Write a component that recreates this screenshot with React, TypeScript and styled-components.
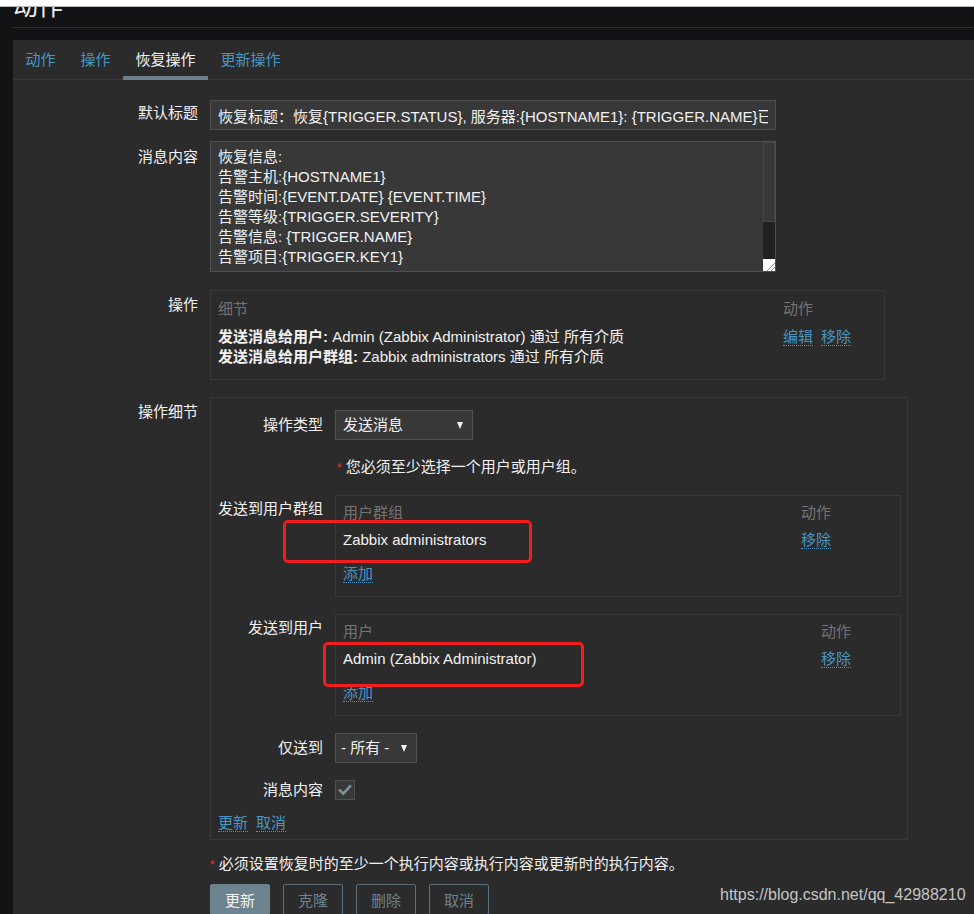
import React from 'react';
import styled, { createGlobalStyle } from 'styled-components';

const FONT = `"Liberation Sans", "Noto Sans CJK SC", sans-serif`;

const GlobalStyle = createGlobalStyle`
  *, *::before, *::after { box-sizing: border-box; }
  html, body { margin: 0; padding: 0; overflow: hidden; background: #121314; }
  body { font-family: ${FONT}; font-size: 15px; color: #f2f2f2; }
`;

const Page = styled.div`
  position: relative;
  width: 974px;
  height: 914px;
  overflow: hidden;
  background: #121314;
`;

const TopStrip = styled.div`
  height: 7px;
  background: #ffffff;
  border-bottom: 1px solid #b8b8b8;
`;

const Header = styled.header`
  margin-left: 13px;
  height: 21px;
  border-bottom: 1px solid #2e2e2e;
  overflow: hidden;
`;

const Title = styled.h1`
  margin: -15px 0 0;
  font-family: "Noto Sans CJK SC", sans-serif;
  font-size: 25px;
  line-height: 25px;
  font-weight: 400;
  color: #f2f2f2;
`;

const Panel = styled.main`
  margin: 12px 0 0 13px;
  min-height: 874px;
  background: #2b2b2b;
  padding-bottom: 40px;
`;

const TabBar = styled.nav`
  display: flex;
  height: 40px;
  border-bottom: 1px solid #383838;
`;

const Tab = styled.div<{ $active?: boolean }>`
  position: relative;
  padding: 0 12.5px;
  line-height: 39px;
  color: ${p => (p.$active ? '#f2f2f2' : '#4796c4')};
  &::after {
    content: '';
    display: ${p => (p.$active ? 'block' : 'none')};
    position: absolute;
    left: 0;
    right: 0;
    bottom: -1px;
    height: 4px;
    background: #6b808c;
  }
`;

const Form = styled.form`
  padding-top: 20px;
`;

const FormRow = styled.div<{ $mt?: number }>`
  display: grid;
  grid-template-columns: 185px auto;
  column-gap: 12px;
  align-items: start;
  margin-top: ${p => p.$mt ?? 0}px;
`;

const FormLabel = styled.label<{ $pt?: number }>`
  text-align: right;
  line-height: 20px;
  padding-top: ${p => p.$pt ?? 0}px;
  color: #f2f2f2;
`;

const TextInput = styled.input`
  display: block;
  width: 566px;
  height: 30px;
  padding: 0 7px;
  background: #383838;
  border: 1px solid #4f4f4f;
  color: #f2f2f2;
  font: inherit;
  font-size: 15px;
  outline: none;
`;

const TextAreaWrap = styled.div`
  position: relative;
  width: 566px;
`;

const TextArea = styled.textarea`
  display: block;
  width: 566px;
  height: 131px;
  padding: 5px 19px 5px 7px;
  background: #383838;
  border: 1px solid #4f4f4f;
  color: #f2f2f2;
  font: inherit;
  font-size: 15px;
  line-height: 20px;
  outline: none;
  resize: none;
  overflow: hidden;
`;

const ScrollTrack = styled.div`
  position: absolute;
  top: 1px;
  right: 1px;
  width: 12px;
  height: 117px;
  background: #212121;
  pointer-events: none;
`;

const ScrollThumb = styled.div`
  height: 80px;
  background: #383838;
  border: 1px solid #464646;
`;

const ResizeCorner = styled.div`
  position: absolute;
  right: 1px;
  bottom: 1px;
  width: 12px;
  height: 12px;
  pointer-events: none;
  background: linear-gradient(
    135deg,
    #ffffff 0%,
    #ffffff 64%,
    #8a8a8a 64%,
    #8a8a8a 70%,
    #ffffff 70%,
    #ffffff 80%,
    #8a8a8a 80%,
    #8a8a8a 86%,
    #ffffff 86%
  );
`;

const TableBox = styled.div<{ $width: number; $action: number; $pt: number; $pb: number }>`
  position: relative;
  display: grid;
  grid-template-columns: 1fr ${p => p.$action}px;
  width: ${p => p.$width}px;
  padding: ${p => p.$pt}px 7px ${p => p.$pb}px;
  border: 1px solid #383838;
`;

const HeadCell = styled.div<{ $pb?: number }>`
  line-height: 24px;
  padding-bottom: ${p => p.$pb ?? 0}px;
  color: #737373;
`;

const Cell = styled.div<{ $lh?: number; $mt?: number }>`
  line-height: ${p => p.$lh ?? 20}px;
  margin-top: ${p => p.$mt ?? 0}px;
  color: #f2f2f2;
  white-space: nowrap;
`;

const Strong = styled.b`
  font-weight: 700;
`;

const Link = styled.a`
  color: #4796c4;
  text-decoration: none;
  border-bottom: 1px dotted #4796c4;
  cursor: pointer;
  & + & {
    margin-left: 8px;
  }
`;

const DetailBox = styled.div`
  width: 698px;
  padding: 12px 6px 6px 7px;
  border: 1px solid #383838;
`;

const DetailGrid = styled.div`
  display: grid;
  grid-template-columns: 105px 566px;
  column-gap: 12px;
  row-gap: 17px;
  align-items: start;
`;

const DetailLabel = styled.label<{ $lh?: number; $pt?: number }>`
  text-align: right;
  line-height: ${p => p.$lh ?? 20}px;
  padding-top: ${p => p.$pt ?? 0}px;
  white-space: nowrap;
`;

const Select = styled.div<{ $width: number; $pl?: number }>`
  display: flex;
  align-items: center;
  justify-content: space-between;
  width: ${p => p.$width}px;
  height: 30px;
  padding: 0 9px 0 ${p => p.$pl ?? 7}px;
  background: #383838;
  border: 1px solid #4f4f4f;
  line-height: 20px;
  &::after {
    content: '';
    width: 0;
    height: 0;
    border-left: 3.5px solid transparent;
    border-right: 3.5px solid transparent;
    border-top: 7px solid #f2f2f2;
  }
`;

const Hint = styled.div<{ $col?: string }>`
  grid-column: ${p => p.$col ?? 'auto'};
  line-height: 20px;
  color: #f2f2f2;
`;

const Star = styled.span<{ $ml?: number }>`
  color: #e33734;
  font-size: 12px;
  margin-left: ${p => p.$ml ?? 0}px;
  margin-right: 4px;
`;

const Checkbox = styled.span`
  display: flex;
  align-items: center;
  justify-content: center;
  width: 20px;
  height: 20px;
  background: #383838;
  border: 1px solid #4f4f4f;
`;

const LinksRow = styled.div`
  grid-column: 1 / -1;
  margin-top: -4px;
  line-height: 20px;
`;

const Annotation = styled.div<{ $left: number; $top: number; $w: number; $h: number }>`
  position: absolute;
  left: ${p => p.$left}px;
  top: ${p => p.$top}px;
  width: ${p => p.$w}px;
  height: ${p => p.$h}px;
  border: 3px solid #f31d1d;
  border-radius: 5px;
  pointer-events: none;
`;

const Footer = styled.div`
  grid-column: 2;
`;

const ButtonRow = styled.div`
  display: flex;
  gap: 13px;
  margin-top: 9px;
`;

const Button = styled.button<{ $primary?: boolean }>`
  width: 60px;
  height: 31px;
  padding: 0;
  font: inherit;
  font-size: 15px;
  color: ${p => (p.$primary ? '#f2f2f2' : '#6d8390')};
  background: ${p => (p.$primary ? '#6d8390' : 'transparent')};
  border: 1px solid ${p => (p.$primary ? '#6d8390' : '#5b6f7b')};
  border-radius: 2px;
`;

const Watermark = styled.div`
  position: absolute;
  left: 720px;
  top: 886px;
  font-family: "Liberation Sans", sans-serif;
  font-size: 16px;
  line-height: 18px;
  color: #c4c4c4;
  white-space: nowrap;
`;

const messageBody = [
  '恢复信息:',
  '告警主机:{HOSTNAME1}',
  '告警时间:{EVENT.DATE} {EVENT.TIME}',
  '告警等级:{TRIGGER.SEVERITY}',
  '告警信息: {TRIGGER.NAME}',
  '告警项目:{TRIGGER.KEY1}',
].join('\n');

export default function App() {
  return (
    <Page>
      <GlobalStyle />
      <TopStrip />
      <Header>
        <Title>动作</Title>
      </Header>
      <Panel>
        <TabBar>
          <Tab>动作</Tab>
          <Tab>操作</Tab>
          <Tab $active>恢复操作</Tab>
          <Tab>更新操作</Tab>
        </TabBar>
        <Form onSubmit={e => e.preventDefault()}>
          <FormRow>
            <FormLabel $pt={3}>默认标题</FormLabel>
            <TextInput
              readOnly
              defaultValue="恢复标题：恢复{TRIGGER.STATUS}, 服务器:{HOSTNAME1}: {TRIGGER.NAME}已恢复!"
            />
          </FormRow>
          <FormRow $mt={11}>
            <FormLabel $pt={6}>消息内容</FormLabel>
            <TextAreaWrap>
              <TextArea readOnly defaultValue={messageBody} />
              <ScrollTrack>
                <ScrollThumb />
              </ScrollTrack>
              <ResizeCorner />
            </TextAreaWrap>
          </FormRow>
          <FormRow $mt={18}>
            <FormLabel $pt={5}>操作</FormLabel>
            <TableBox $width={675} $action={94} $pt={6} $pb={12}>
              <HeadCell $pb={6}>细节</HeadCell>
              <HeadCell $pb={6}>动作</HeadCell>
              <Cell>
                <Strong>发送消息给用户:</Strong> Admin (Zabbix Administrator) 通过 所有介质
              </Cell>
              <Cell>
                <Link>编辑</Link>
                <Link>移除</Link>
              </Cell>
              <Cell>
                <Strong>发送消息给用户群组:</Strong> Zabbix administrators 通过 所有介质
              </Cell>
              <Cell />
            </TableBox>
          </FormRow>
          <FormRow $mt={17}>
            <FormLabel $pt={5}>操作细节</FormLabel>
            <DetailBox>
              <DetailGrid>
                <DetailLabel $lh={30}>操作类型</DetailLabel>
                <Select $width={138}>发送消息</Select>

                <Hint $col="2">
                  <Star $ml={2}>*</Star>您必须至少选择一个用户或用户组。
                </Hint>

                <DetailLabel $pt={4}>发送到用户群组</DetailLabel>
                <TableBox $width={566} $action={92} $pt={5} $pb={12}>
                  <HeadCell>用户群组</HeadCell>
                  <HeadCell>动作</HeadCell>
                  <Cell $lh={30}>Zabbix administrators</Cell>
                  <Cell $lh={30}>
                    <Link>移除</Link>
                  </Cell>
                  <Cell $mt={9}>
                    <Link>添加</Link>
                  </Cell>
                  <Cell />
                  <Annotation $left={-53} $top={24} $w={249} $h={43} />
                </TableBox>

                <DetailLabel $pt={4}>发送到用户</DetailLabel>
                <TableBox $width={566} $action={72} $pt={5} $pb={12}>
                  <HeadCell>用户</HeadCell>
                  <HeadCell>动作</HeadCell>
                  <Cell $lh={30}>Admin (Zabbix Administrator)</Cell>
                  <Cell $lh={30}>
                    <Link>移除</Link>
                  </Cell>
                  <Cell $mt={9}>
                    <Link>添加</Link>
                  </Cell>
                  <Cell />
                  <Annotation $left={-13} $top={27} $w={261} $h={45} />
                </TableBox>

                <DetailLabel $lh={30}>仅送到</DetailLabel>
                <Select $width={82} $pl={5}>- 所有 -</Select>

                <DetailLabel>消息内容</DetailLabel>
                <Checkbox>
                  <svg width="14" height="14" viewBox="0 0 14 14">
                    <path
                      d="M2 7.5 L5.3 10.6 L12 3.4"
                      fill="none"
                      stroke="#7f909a"
                      strokeWidth="2.6"
                      strokeLinecap="square"
                    />
                  </svg>
                </Checkbox>

                <LinksRow>
                  <Link>更新</Link>
                  <Link>取消</Link>
                </LinksRow>
              </DetailGrid>
            </DetailBox>
          </FormRow>
          <FormRow $mt={14}>
            <Footer>
              <Hint>
                <Star>*</Star>必须设置恢复时的至少一个执行内容或执行内容或更新时的执行内容。
              </Hint>
              <ButtonRow>
                <Button type="button" $primary>更新</Button>
                <Button type="button">克隆</Button>
                <Button type="button">删除</Button>
                <Button type="button">取消</Button>
              </ButtonRow>
            </Footer>
          </FormRow>
        </Form>
      </Panel>
      <Watermark>https://blog.csdn.net/qq_42988210</Watermark>
    </Page>
  );
}
